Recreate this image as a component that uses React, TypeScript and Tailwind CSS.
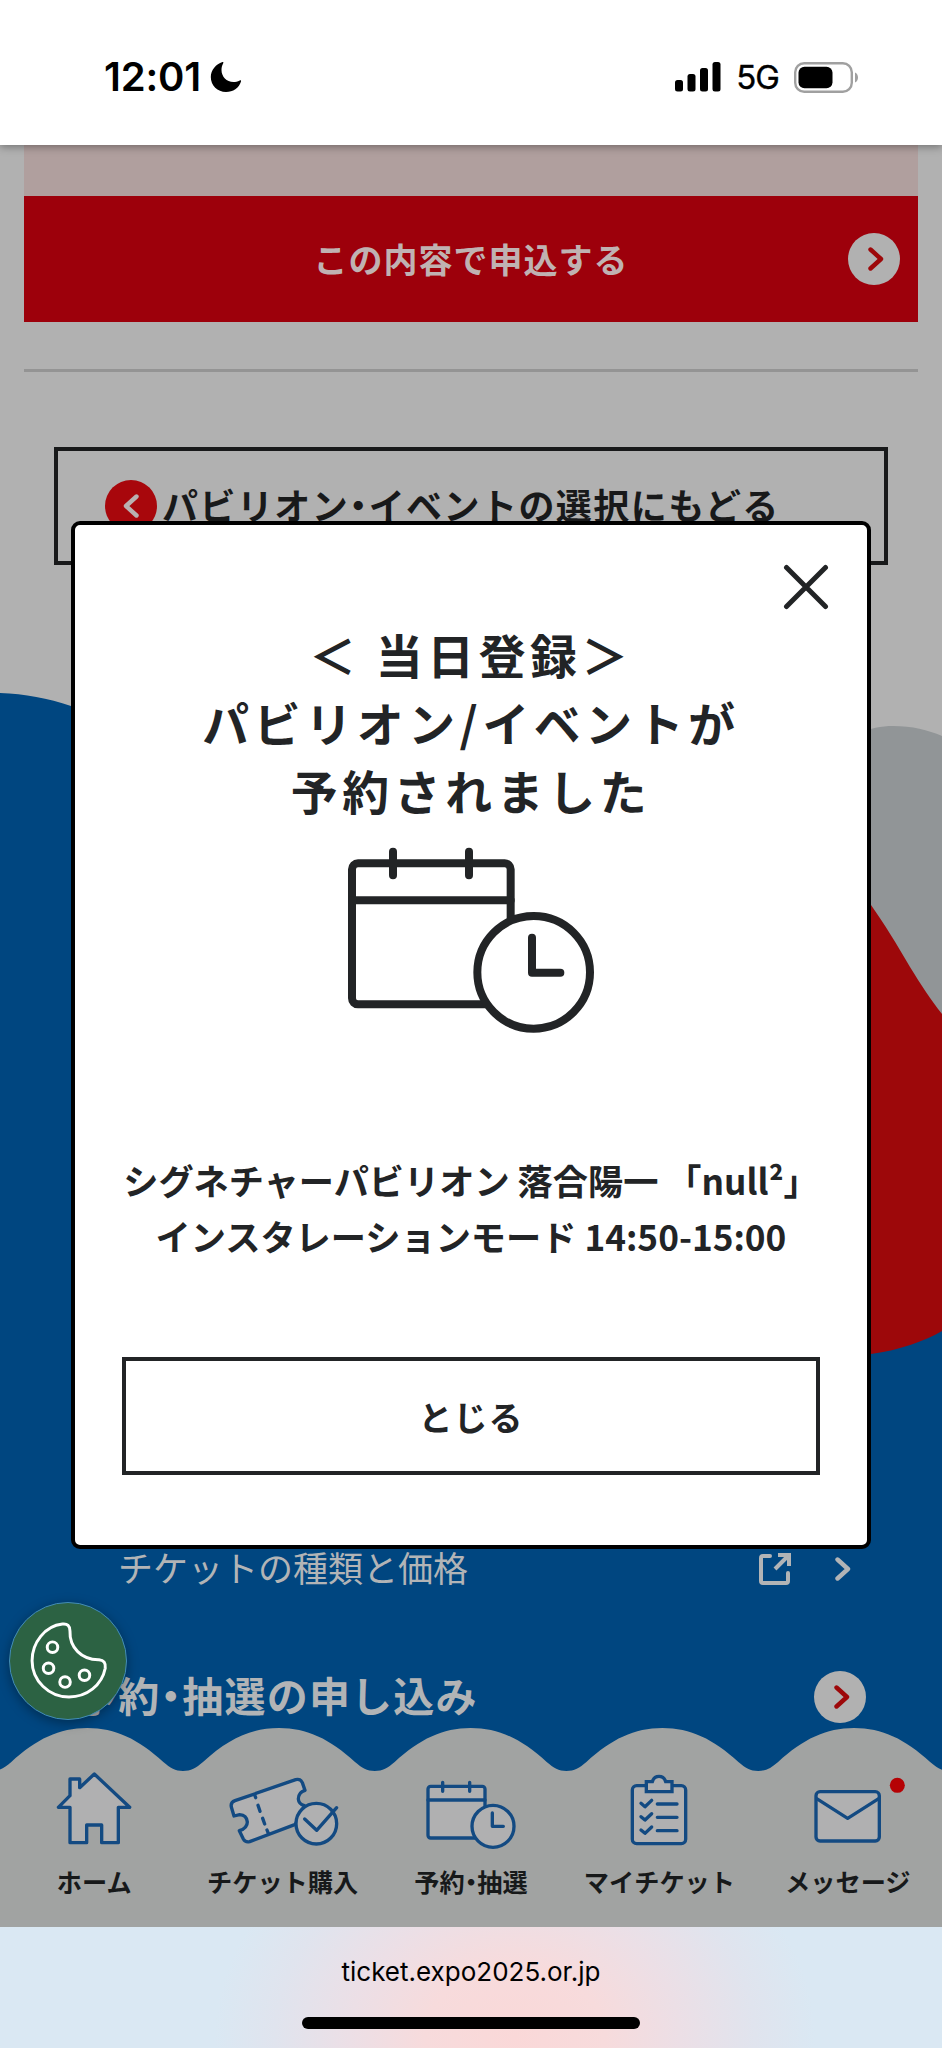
import React from 'react';
import clsx from 'clsx';

const NAV_STROKE = '#134a82';
const NAV_FILL = '#b0b0b1';

// Middle dot set at half width, as in proportional kana
function Dot() {
  return <span className="[font-feature-settings:'halt']">・</span>;
}

function Chevron({ className, flip }: { className?: string; flip?: boolean }) {
  return (
    <svg
      viewBox="0 0 16 24"
      className={clsx('h-6 w-4', flip && '-scale-x-100', className)}
      fill="none"
      stroke="currentColor"
      strokeWidth="4.4"
      strokeLinecap="round"
      strokeLinejoin="round"
    >
      <path d="M2.5 2.5 L13 12 L2.5 21.5" />
    </svg>
  );
}

function StatusBar() {
  return (
    <header className="relative z-10 flex h-[145px] shrink-0 items-start justify-between bg-white pt-[61px] pr-[82px] pl-[104px] shadow-[0_2px_8px_rgba(0,0,0,0.35)]">
      <div className="flex h-8 items-center">
        <span className="font-[Inter] text-[40px] leading-8 font-semibold tracking-[-0.2px] text-black">12:01</span>
        <svg viewBox="0 0 32 32" className="ml-[9px] h-8 w-8" fill="#000">
          <path d="M12.5 1 C6 3 0.8 9 0.8 16 C0.8 24.5 7.5 31 16 31 C23 31 29 27 31 20.5 C31.3 19.5 30.5 19 29.8 19.4 C27.5 20.6 25.5 21 23.5 21 C16.5 21 11.5 15.5 11.5 9 C11.5 6.5 12 4.5 13.2 2.2 C13.6 1.4 13.3 0.8 12.5 1Z" />
        </svg>
      </div>
      <div className="flex h-8 items-center">
        <svg viewBox="0 0 46 30" className="h-[30px] w-[46px]" fill="#000">
          <rect x="0" y="18" width="8" height="11.5" rx="2.5" />
          <rect x="12.5" y="12" width="8" height="17.5" rx="2.5" />
          <rect x="25" y="6" width="8" height="23.5" rx="2.5" />
          <rect x="37.5" y="0" width="8" height="29.5" rx="2.5" />
        </svg>
        <span className="ml-[15px] font-[Inter] text-[33px] leading-8 tracking-[-1px] text-black [-webkit-text-stroke:0.4px_#000]">
          5G
        </span>
        <svg viewBox="0 0 66 31" className="ml-[15px] h-[31px] w-[66px]">
          <rect x="1.2" y="1.2" width="56.6" height="28.6" rx="9" fill="none" stroke="#a0a0a0" strokeWidth="2.4" />
          <rect x="4.5" y="4.8" width="34" height="21.4" rx="6" fill="#000" />
          <path d="M61 10.5 C65 12 65 19 61 20.5Z" fill="#a0a0a0" />
        </svg>
      </div>
    </header>
  );
}

function Waves() {
  return (
    <svg viewBox="0 145 942 1782" className="absolute inset-0 h-full w-full">
      <path d="M800 790 C830 740 865 726 893 726 C912 726 928 730 942 736 V1100 H800Z" fill="#919597" />
      <path d="M840 868 C853 884 862 894 871 905 C885 925 896 943 910 967 C921 985 931 1000 942 1014 V1400 H800Z" fill="#9d080a" />
      <path d="M0 693 C25 694 48 698 71 706 C160 740 180 900 300 1100 C500 1350 750 1380 871 1354 C900 1350 925 1341 942 1331 V1927 H0Z" fill="#004680" />
    </svg>
  );
}

function CalendarClock() {
  return (
    <svg
      viewBox="0 0 738 558"
      className="mt-[23px] h-[186px] w-[246px]"
      fill="none"
      stroke="#222426"
      strokeWidth="24"
      strokeLinecap="round"
      strokeLinejoin="round"
    >
      <rect x="12" y="49" width="476" height="423" rx="18" />
      <path d="M12 160 H488 M135 14 V85 M363 14 V85" />
      <circle cx="557" cy="376" r="169" fill="#fff" />
      <path d="M552 272 V377 H637" />
    </svg>
  );
}

function Modal() {
  return (
    <div className="absolute inset-0 z-10 flex items-start justify-center pt-[376px]">
      <div className="relative flex h-[1028px] w-[800px] flex-col items-center rounded-[9px] border-4 border-black bg-white pt-[95px] text-[#222426]">
        <button className="absolute top-[39px] right-[38px]" aria-label="close">
          <svg viewBox="0 0 46 46" className="h-[46px] w-[46px]" stroke="#222426" strokeWidth="5" strokeLinecap="round">
            <path d="M3.5 3.5 L42.5 42.5 M42.5 3.5 L3.5 42.5" />
          </svg>
        </button>
        <h1 className="text-center text-[46.8px] leading-[68px] font-bold tracking-[0.1em]">
          ＜ 当日登録＞
          <br />
          パビリオン/イベントが
          <br />
          予約されました
        </h1>
        <CalendarClock />
        <p className="mt-[119px] h-[116px] text-center text-[35.2px] leading-[56px] font-bold whitespace-nowrap">
          シグネチャーパビリオン 落合陽一 「null²」
          <br />
          インスタレーションモード 14:50-15:00
        </p>
        <button className="mt-[89px] flex h-[118px] w-[698px] items-center justify-center border-4 border-[#222426] text-[34px] font-bold tracking-[0.03em]">
          とじる
        </button>
      </div>
    </div>
  );
}

function CookieButton() {
  return (
    <button className="absolute top-[1457px] left-[9px] z-20 h-[118px] w-[118px] rounded-full border border-[#418cb8] bg-[#2c6243] shadow-[0_3px_12px_rgba(0,0,0,0.35)]">
      <svg viewBox="28 185 352 352" className="h-full w-full" fill="none" stroke="#fff" strokeWidth="9" strokeLinejoin="round">
        <path d="M187 249 Q210 246 210 270 C208 320 245 358 298 357 Q320 359 317 383 C307 434 262 470 207 470 C145 470 95 420 95 360 C95 305 134 255 187 249Z" />
        <circle cx="157" cy="319" r="16" />
        <circle cx="145" cy="383" r="16" />
        <circle cx="195" cy="425" r="16" />
        <circle cx="254" cy="404" r="16" />
      </svg>
    </button>
  );
}

const navItems = [
  {
    label: 'ホーム',
    icon: (
      <path d="M181 27 L287 127 H253 V233 H203 V180 H158 V233 H108 V127 H73 L108 92 V42 H137 V68Z" />
    ),
  },
  {
    label: 'チケット購入',
    icon: (
      <>
        <path d="M25 126 Q22 112 36 107 L218 44 Q232 40 238 53 L246 76 Q226 82 226 102 Q227 117 244 122 L217 178 L80 230 Q67 233 61 222 L49 197 Q73 190 73 171 Q71 150 50 149 L33 153Z" />
        <path d="M95 90 L98 98 M105 121 L111 139 M119 160 L125 177 M132 195 L136 205" />
        <circle cx="280" cy="176" r="61" />
        <path d="M245 162 L281 196 L341 128" fill="none" />
      </>
    ),
  },
  {
    label: (
      <>
        予約
        <Dot />
        抽選
      </>
    ),
    icon: (
      <>
        <rect x="51" y="64" width="171" height="155" rx="8" />
        <path d="M51 105 H222 M95 52 V79 M176 52 V79" />
        <circle cx="246" cy="184" r="63" />
        <path d="M244 144 V184 H277" fill="none" />
      </>
    ),
  },
  {
    label: 'マイチケット',
    icon: (
      <>
        <rect x="100" y="62" width="160" height="174" rx="13" />
        <path d="M142 50 H160 C163 40 170 34 180 34 C190 34 197 40 200 50 H219 V80 H142Z" strokeLinejoin="miter" />
        <path d="M126 115 L138 125 L158 106 M126 155 L138 165 L158 146 M126 195 L138 205 L158 186" fill="none" />
        <path d="M175 117 H234 M175 157 H234 M175 197 H234" />
      </>
    ),
  },
  {
    label: 'メッセージ',
    icon: (
      <>
        <rect x="84" y="80" width="190" height="148" rx="12" />
        <path d="M86 101 L179 160 L272 101" fill="none" />
        <circle cx="328" cy="61" r="22.5" fill="#b50205" stroke="none" />
      </>
    ),
  },
];

// Scalloped top edge, one hump per nav item
const PERIOD = 191.7;
let edge = 'M-8.7 1771';
for (let i = 0; i < 5; i++) {
  const t = -8.7 + i * PERIOD;
  edge += ` C${t + 8} 1771 ${t + 13} 1768 ${t + 20} 1762 C${t + 45} 1739 ${t + 68} 1728 ${t + 96} 1728`;
  edge += ` C${t + 124} 1728 ${t + 147} 1739 ${t + 172} 1762 C${t + 179} 1768 ${t + 184} 1771 ${t + PERIOD} 1771`;
}

function BottomNav() {
  return (
    <nav className="absolute inset-x-0 bottom-0 z-[5] flex h-[199px] pt-[37px]">
      <svg viewBox="0 1728 942 199" className="absolute inset-0 h-full w-full" fill="#a1a3a2">
        <path d={`${edge} V1927 H-9Z`} />
      </svg>
      {navItems.map((item, i) => (
        <a key={i} className="relative flex flex-1 flex-col items-center">
          <svg
            viewBox="0 0 360 240"
            className="h-20 w-[120px] overflow-visible"
            fill={NAV_FILL}
            stroke={NAV_STROKE}
            strokeWidth="10"
            strokeLinecap="round"
            strokeLinejoin="round"
          >
            {item.icon}
          </svg>
          <span className="mt-[18px] text-[25.2px] leading-9 font-bold whitespace-nowrap text-[#17191a]">{item.label}</span>
        </a>
      ))}
    </nav>
  );
}

function PageContent() {
  return (
    <div className="relative flex flex-col">
      <div className="mx-6 h-[51px] bg-[#b09f9e]" />
      <div className="relative mx-6 flex h-[126px] items-center justify-center bg-[#9d000b] text-[34px] font-bold tracking-[0.03em] text-[#c0b2b2]">
        <span className="mb-[2px]">この内容で申込する</span>
        <span className="absolute right-[18px] flex h-[52px] w-[52px] items-center justify-center rounded-full bg-[#b1b1b1] text-[#9d080a]">
          <Chevron className="ml-1" />
        </span>
      </div>
      <hr className="mx-6 mt-[47px] border-t-[3px] border-[#949494]" />
      <div className="mx-[54px] mt-[75px] flex h-[118px] items-center border-4 border-[#18191a] pl-[47px] text-[36px] font-bold whitespace-nowrap text-[#18191a]">
        <span className="mr-[5px] flex h-[52px] w-[52px] items-center justify-center rounded-full bg-[#a8070c] text-[#b9b1b1]">
          <Chevron flip />
        </span>
        <span className="mb-[5px] tracking-[0.04em]">
          パビリオン
          <Dot />
          イベントの選択にもどる
        </span>
      </div>
      <div className="mt-[979px] flex h-[50px] items-center pr-[91px] pl-[118px] text-[#b2b4b6]">
        <span className="mb-[4px] text-[35px]">チケットの種類と価格</span>
        <svg viewBox="0 0 34 34" className="ml-auto h-[34px] w-[34px]" fill="none" stroke="currentColor" strokeWidth="4">
          <path d="M12 4 H5 Q3 4 3 6 V29 Q3 31 5 31 H28 Q30 31 30 29 V21" strokeLinecap="round" />
          <path d="M17 17 L30 4" />
          <path d="M20 3 H31 V14" />
        </svg>
        <Chevron className="ml-[43px]" />
      </div>
      <div className="mt-[73px] flex h-[60px] items-center pr-[76px] pl-[76px] text-[#b2b4b6]">
        <span className="mb-[4px] text-[41px] font-bold tracking-[0.03em]">
          予約
          <Dot />
          抽選の申し込み
        </span>
        <span className="ml-auto flex h-[52px] w-[52px] items-center justify-center rounded-full bg-[#b1b1b1] text-[#9d080a]">
          <Chevron className="ml-1" />
        </span>
      </div>
    </div>
  );
}

export default function App() {
  return (
    <div className="flex h-[2048px] w-[942px] flex-col overflow-hidden bg-[#b1b1b1] font-['Noto_Sans_CJK_JP',sans-serif]">
      <StatusBar />
      <main className="relative h-[1782px] shrink-0 overflow-hidden">
        <Waves />
        <PageContent />
        <BottomNav />
        <Modal />
        <CookieButton />
      </main>
      <footer className="flex flex-1 flex-col items-center bg-[#dae8f3] bg-[radial-gradient(ellipse_300px_240px_at_515px_110px,#fad8d8_0%,#f7dbdc_30%,#ecdfe6_55%,#e0e4ee_80%,#dae8f3_100%)] pt-[29px]">
        <span className="font-[Inter] text-[26px] leading-8 text-black">ticket.expo2025.or.jp</span>
        <div className="mt-[29px] h-3 w-[338px] rounded-full bg-black" />
      </footer>
    </div>
  );
}
